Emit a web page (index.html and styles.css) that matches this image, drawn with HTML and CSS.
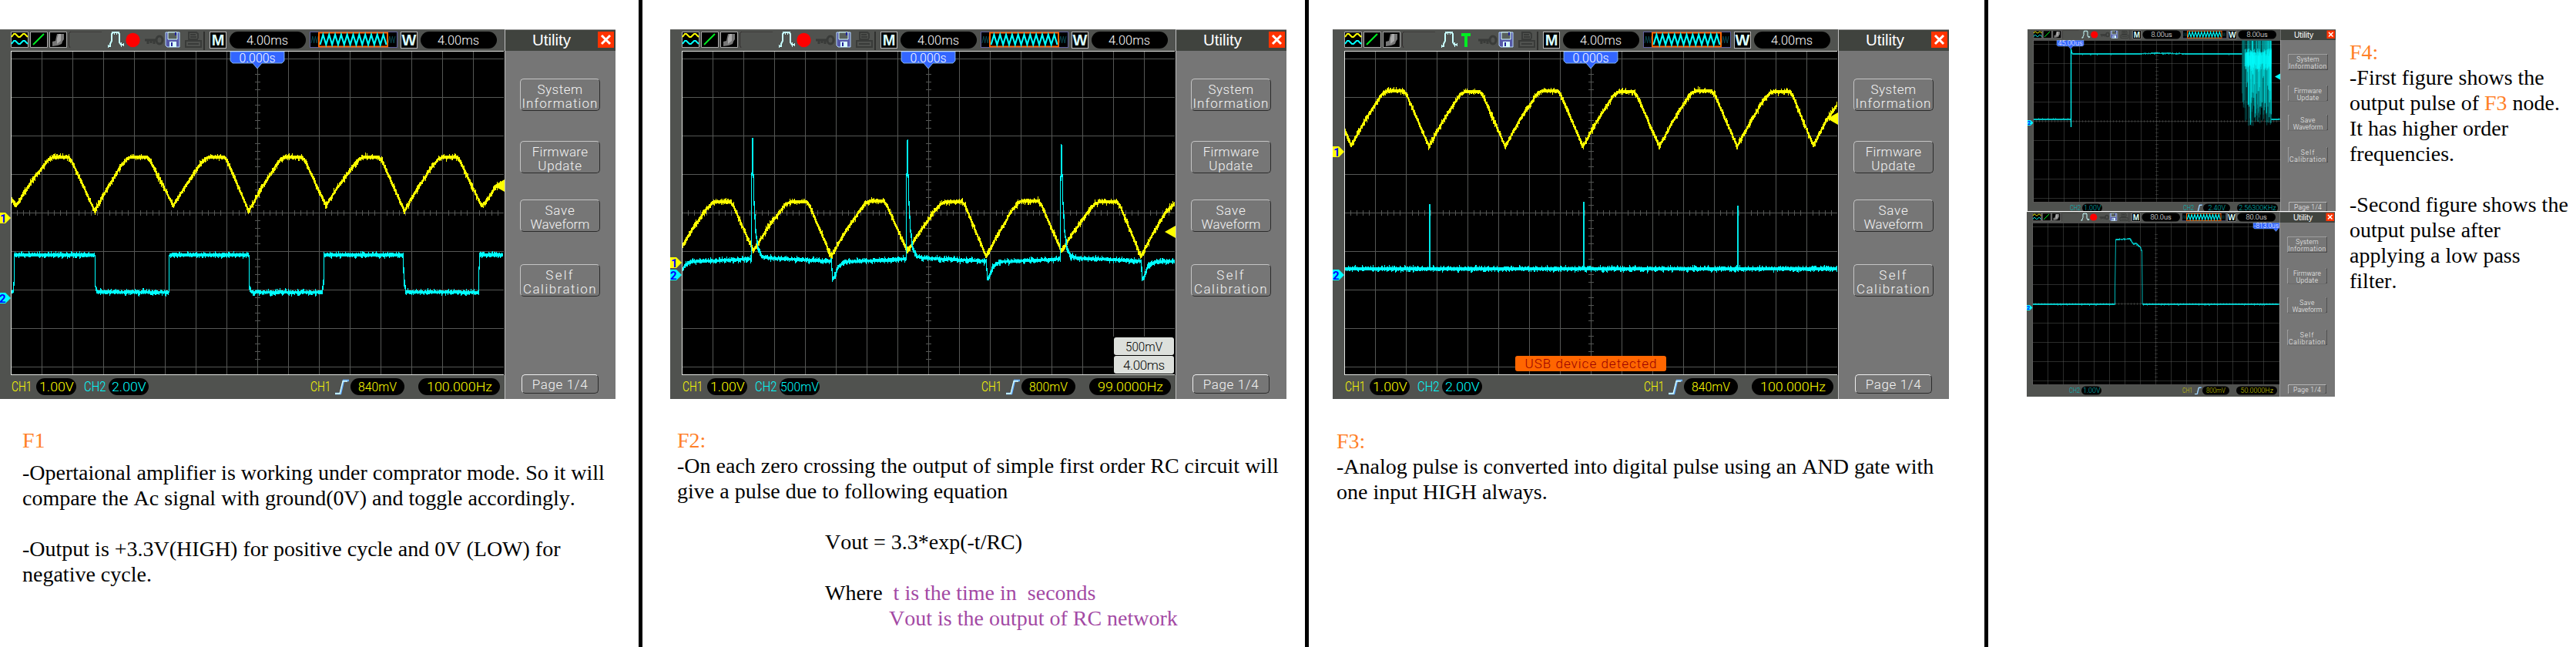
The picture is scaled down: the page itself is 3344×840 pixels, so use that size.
FILE: index.html
```
<!DOCTYPE html>
<html lang="en">
<head>
<meta charset="utf-8">
<title>Oscilloscope figures</title>
<link rel="stylesheet" href="styles.css">
</head>
<body>
<main class="board">
  <section class="panel panel-1">
    <div class="scope" data-scope="f1"></div>
    <div class="note">
      <h2 class="tag tag-gap">F1</h2>
      <p>-Opertaional amplifier is working under comprator mode. So it will<br>compare the Ac signal with ground(0V) and toggle accordingly.</p>
      <p>-Output is +3.3V(HIGH) for positive cycle and 0V (LOW) for<br>negative cycle.</p>
    </div>
  </section>
  <section class="panel panel-2">
    <div class="scope" data-scope="f2"></div>
    <div class="note">
      <h2 class="tag">F2:</h2>
      <p>-On each zero crossing the output of simple first order RC circuit will<br>give a pulse due to following equation</p>
      <div class="equation">
        <p>Vout = 3.3*exp(-t/RC)</p>
        <p>Where <span class="purple time">t is the time in&nbsp; seconds</span><br><span class="purple vout">Vout is the output of RC network</span></p>
      </div>
    </div>
  </section>
  <section class="panel panel-3">
    <div class="scope" data-scope="f3"></div>
    <div class="note">
      <h2 class="tag">F3:</h2>
      <p>-Analog pulse is converted into digital pulse using an AND gate with<br>one input HIGH always.</p>
    </div>
  </section>
  <section class="panel panel-4">
    <div class="thumbs">
      <div class="thumb thumb-top"><div class="scope small" data-scope="f4a"></div></div>
      <div class="thumb thumb-bottom"><div class="scope small" data-scope="f4b"></div></div>
    </div>
    <div class="note">
      <h2 class="tag">F4:</h2>
      <p>-First figure shows the<br>output pulse of <span class="orange">F3</span> node.<br>It has higher order<br>frequencies.</p>
      <p>-Second figure shows the<br>output pulse after<br>applying a low pass<br>filter.</p>
    </div>
  </section>
</main>
<script src="scope.js"></script>
</body>
</html>
```
FILE: styles.css
```
* { box-sizing: border-box; }
body { margin: 0; background: #fff; }
.board { display: flex; width: 3344px; height: 840px; overflow: hidden; }
.panel { flex: none; height: 840px; padding-top: 38px; border-right: 5px solid #000; overflow: hidden; }
.panel-1 { width: 834px; }
.panel-2 { width: 865px; padding-left: 36px; }
.panel-3 { width: 882px; padding-left: 31px; }
.panel-4 { width: 763px; padding-left: 50px; border-right: 0; display: flex; align-items: flex-start; }
.panel-1 .scope { margin-left: -1px; }

.note { font: 28px/33px "Liberation Serif", "Times New Roman", serif; font-kerning: none; color: #000; padding-top: 37px; white-space: nowrap; }
.note p { margin: 0 0 33px; }
.tag { margin: 0; font: inherit; font-kerning: none; color: #ff7f27; }
.tag-gap { margin-bottom: 9px; }
.orange { color: #ff7f27; }
.purple { color: #a349a4; }
.panel-1 .note { padding-left: 29px; }
.panel-2 .note { padding-left: 9px; }
.panel-3 .note { padding-left: 5px; padding-top: 38px; }
.panel-4 .note { padding-left: 18px; padding-top: 13px; }
.equation { padding-left: 192px; }
.time { margin-left: 7px; }
.vout { margin-left: 83px; }

.thumbs { width: 401px; flex: none; }
.thumb { width: 400px; overflow: hidden; }
.thumb-top { height: 236px; margin: 0 0 1px 1px; }
.thumb-bottom { height: 240px; }
.small { transform: scale(.5); transform-origin: 0 0; }

.scope { width: 800px; height: 480px; display: flex; background: #50524f; font-family: Roboto, "Liberation Sans", Arial, sans-serif; font-weight: 300; color: #fff; }
.main { width: 656px; height: 480px; flex: none; border-top: 1px solid #6a6c69; }
.toolbar { height: 27px; display: flex; padding: 2px 0 0 15px; }
.toolbar > * { flex: none; }
.toolbar svg { display: block; }
.letter { width: 22px; height: 22px; border: 1px solid #b8b8b8; background: #000; color: #dff; font-family: "Liberation Sans", Arial, sans-serif; font-weight: bold; font-size: 20px; line-height: 20px; text-align: center; }
.pill { background: #000; border-radius: 11px; height: 22px; line-height: 23px; font-size: 17px; display: flex; justify-content: center; white-space: nowrap; }
.toolbar .pill { width: 99px; }
.icons { width: 252px; height: 24px; }
.letter-m { margin: 0 4px 0 6px; }
.preview { margin: 0 4px 0 5px; }
.letter-w { margin-right: 4px; }
.plot { display: block; width: 656px; height: 421px; }
.status { height: 31px; padding: 4px 0 0 16px; display: flex; }
.status > * { flex: none; }
.ch { height: 22px; font-size: 17.5px; line-height: 22px; white-space: nowrap; }
.ch-a { width: 32px; }
.ch-b { width: 32px; margin-left: 10px; }
.ch-t { width: 32px; margin-left: 210px; }
.status .pill { width: 52px; }
.status .pill-level { width: 70px; margin-left: 2px; }
.status .pill-freq { width: 106px; margin-left: 18px; }
.edge { display: block; width: 18px; height: 22px; }
.hidden { visibility: hidden; }
.yellow { color: #ff0; }
.cyan { color: #0ff; }
.small .yellow { color: #cccc00; }
.small .cyan { color: #00bcbc; }
.fit { display: inline-block; flex: none; transform-origin: 50% 50%; }
.ch .fit { transform-origin: 0 50%; }

.side { width: 144px; height: 480px; background: #767676; border-left: 1px solid #c0c0c0; }
.side-head { height: 28px; background: #40433e; border-top: 1px solid #a0a0a0; display: flex; padding-top: 2px; }
.side-title { width: 120px; text-align: center; font-family: "Liberation Sans", Arial, sans-serif; font-weight: 400; font-size: 20.5px; line-height: 21px; }
.close { display: block; width: 21px; height: 21px; background: #ff3300; }
.btn { width: 104px; height: 42px; margin-left: 19px; border: 1px solid; border-color: #c4c4c4 #2c2c2c #2c2c2c #c4c4c4; border-radius: 5px; text-align: center; font-size: 17px; line-height: 18px; padding-top: 4px; white-space: nowrap; color: #f4f4f4; display: flex; flex-direction: column; align-items: center; }
.btn-1 { margin-top: 36px; }
.btn-2 { margin-top: 39px; }
.btn-3 { margin-top: 34px; }
.btn-4 { margin-top: 42px; }
.btn-page { width: 100px; height: 25px; margin: 101px 0 0 21px; padding-top: 3px; border-color: #eee #2c2c2c #2c2c2c #eee; }
```
FILE: scope.js
```
// Seeded generator so that the noise on the traces is stable between loads.
function rng(seed) {
  return function () {
    seed = (seed * 1664525 + 1013904223) % 4294967296;
    return seed / 4294967296;
  };
}

// One vertical bar per pixel column between neighbouring samples.
function trace(points, noise, seed) {
  const rnd = rng(seed);
  let d = '';
  for (let i = 0; i < points.length - 1; i++) {
    const [x0, y0] = points[i], [x1, y1] = points[i + 1];
    if (x1 - x0 < 1) {
      d += `M${Math.floor(x0) + .5} ${Math.min(y0, y1)}V${Math.max(y0, y1)}`;
      continue;
    }
    for (let x = x0; x < x1; x++) {
      const a = y0 + (y1 - y0) * (x - x0) / (x1 - x0);
      const b = y0 + (y1 - y0) * Math.min(1, (x + 1 - x0) / (x1 - x0));
      const top = Math.round(Math.min(a, b) - 1.5 - noise * rnd() * rnd());
      const bottom = Math.round(Math.max(a, b) + 1.5 + noise * rnd() * rnd());
      d += `M${Math.floor(x) + .5} ${top}V${bottom}`;
    }
  }
  return d;
}

// Rectified wave: [valleyX, valleyY, topStart, topEnd, topY] per hump.
function humps(start, list, end) {
  const p = [start];
  for (const [vx, vy, a, b, ty] of list) {
    const at = (t, h) => [vx + (a - vx) * t, vy - (vy - ty) * h];
    p.push([vx, vy], at(.16, .18), at(.36, .41), at(.62, .68), at(.8, .86), at(.92, .96), [a + 2, ty], [b - 1, ty], [b + 3, ty + 5]);
  }
  return p.concat(end);
}

const f2Cyan = [[16, 312], [19, 307], [24, 303], [32, 301.5], [101, 298.5], [105, 298]];
[[107, 144, 211], [308, 146, 412], [508, 152, 613]].forEach(([s, top, drop]) => {
  f2Cyan.push([s - 1.4, 298], [s, top], [s + 1, 190], [s + 2, 226], [s + 4, 262], [s + 7, 284], [s + 12, 295], [s + 20, 297],
    [drop - 2, 301], [drop, 324], [drop + 2, 322], [drop + 7, 308], [drop + 16, 302]);
  if (s < 500) f2Cyan.push([s + 195, 298.5]);
});
f2Cyan.push([655, 301]);

function burst() {
  const rnd = rng(12);
  let dark = '', bright = '';
  for (let x = 557; x < 633; x++) {
    const near = x < 575;
    if (rnd() < (near ? .6 : .92)) dark += `M${x + .5} ${rnd() < .85 ? 29 : 50}V${near && x < 564 ? 165 + rnd() * 40 : 185 + rnd() * 66}`;
    if (x > 563 && rnd() < .96) bright += `M${x + .5} ${50 + rnd() * 20}V${88 + rnd() * 20}`;
    if (x > 567 && rnd() < .5) bright += `M${x + .5} ${rnd() < .4 ? 30 : 60}V${110 + rnd() * 120}`;
  }
  bright += 'M632 50V244M628 50V190M606 60V200M598 70V240M579 60V248';
  return `<path d="${dark}" stroke="#008c8c" stroke-width="1.2"/><path d="${bright}" stroke="#0ff" stroke-width="1.3"/>`;
}

const scopes = {
  f1: {
    time: '4.00ms', pos: [300, 370, 335, '0.000s'], ch1: '1.00V', ch2: '2.00V', src: 'CH1', level: '840mV', freq: '100.000Hz',
    marks: [[1, 245], [2, 349]], arrow: [203, '#ff0'],
    yellow: humps([16, 220], [[22, 229, 69, 91, 166], [124, 236, 169, 193, 166], [226, 229, 271, 293, 166], [324, 236, 370, 394, 166],
      [424, 229, 472, 494, 166], [526, 236, 574, 595, 166]], [[626, 229], [632, 224], [645, 204], [655, 202]]),
    cyan: [[16, 341], [18, 340], [19, 330], [20, 293], [124, 293], [124.5, 331], [125, 335], [127, 341], [220, 341.5], [220.5, 310], [221, 293],
      [324, 293], [324.5, 330], [326, 339], [328, 341.5], [419, 341.5], [421, 328], [422, 293], [524, 293], [526, 330], [528, 341], [622, 341.5], [623, 310], [624, 293], [654, 293]]
  },
  f2: {
    time: '4.00ms', pos: [300, 370, 335, '0.000s'], ch1: '1.00V', ch2: '500mV', src: 'CH1', level: '800mV', freq: '99.0000Hz',
    marks: [[1, 303], [2, 319]], arrow: [263, '#ff0'],
    yellow: humps([16, 280], [[17, 279, 57, 79, 224], [108, 288, 155, 178, 224], [209, 295, 258, 278, 223], [308, 288, 356, 380, 224],
      [410, 295, 455, 479, 223], [508, 288, 556, 581, 224]], [[611, 295], [628, 263], [643, 238], [655, 226]]),
    cyan: f2Cyan, extra: 'scale'
  },
  f3: {
    time: '4.00ms', pos: [300, 370, 335, '0.000s'], ch1: '1.00V', ch2: '2.00V', src: 'CH1', level: '840mV', freq: '100.000Hz', ready: true,
    marks: [[1, 159], [2, 319]], arrow: [116, '#ff0'],
    yellow: humps([16, 131], [[24, 151, 70, 93, 80], [125, 152, 171, 192, 81], [224, 152, 271, 293, 80], [325, 152, 371, 392, 81],
      [424, 152, 470, 493, 80], [525, 152, 570, 594, 81]], [[624, 151], [640, 120], [655, 98]]),
    cyan: [[16, 311], [655, 311]], spikes: 'M126 227V310M326 224V310M526 229V310', extra: 'usb'
  },
  f4a: {
    time: '8.00us', pos: [76, 146, 112, '45.00us'], ch2: '1.00V', src: 'CH2', level: '2.40V', freq: '2.56300KHz',
    marks: [[2, 243]], arrow: [123, '#0ff'], burst: true,
    cyan: [[16, 233], [112, 233], [112.5, 254], [113, 51], [114, 56], [117, 64], [240, 64], [330, 62], [420, 63], [557, 64]],
    cyan2: [[633, 233], [655, 233]], rise: 'M113 51V254'
  },
  f4b: {
    time: '80.0us', pos: [588, 656, 647, '-813.0us'], ch2: '1.00V', src: 'CH1', level: '800mV', freq: '50.0000Hz',
    marks: [[2, 249]],
    cyan: [[16, 240], [229, 240]], cyan2: [[231, 72], [240, 71], [268, 70], [277, 83], [284, 82], [295, 91], [299, 103]], cyan3: [[301, 240], [655, 240]],
    spikes: 'M229 240V200L231 72M299 100L300 206V240'
  }
};

function grid() {
  let lines = '', ticks = '';
  for (let x = 55; x < 655; x += 40) lines += `M${x + .5} 29V448`;
  for (let y = 38; y < 448; y += 50) lines += `M16 ${y + .5}H655`;
  for (let x = 23; x < 655; x += 8) ticks += `M${x + .5} 235V242`;
  for (let y = 38; y < 448; y += 10) if (y > 50) ticks += `M332 ${y + .5}H339`;
  return `<path d="${lines}${ticks}" stroke="#555755"/>`;
}

function plot(s, small) {
  const line = (p, n, seed, c) => p ? `<path d="${trace(p, n, seed)}" stroke="${c}"/>` : '';
  const [a, b, p, label] = s.pos;
  const marks = s.marks.map(([n, y]) =>
    `<path d="M0 ${y - 7}H8L15 ${y}L8 ${y + 7}H0Z" fill="${n === 1 ? '#ff0' : '#0ff'}"/>
     <text x="${n === 1 ? 1 : 0}" y="${y + 5.5}" font-size="15" font-weight="bold" fill="#00f">${n}</text>`).join('');
  const arrow = s.arrow ? `<path d="M642 ${s.arrow[0]}L656 ${s.arrow[0] - 8}V${s.arrow[0] + 8}Z" fill="${s.arrow[1]}"/>` : '';
  let extra = '';
  if (s.extra === 'usb') extra = `<rect x="237" y="424" width="196" height="20" rx="3" fill="#f60"/>
    <text x="249.5" y="440" font-size="17" textLength="171" fill="#900">USB device detected</text>`;
  if (s.extra === 'scale') extra = `<path d="M575 399h80v49h-80z" fill="#000"/><rect x="576" y="400" width="78" height="23" rx="3" fill="#dde0dc"/>
    <rect x="576" y="424" width="78" height="23" rx="3" fill="#dde0dc"/>
    <text x="591" y="417.5" font-size="17" textLength="48" lengthAdjust="spacingAndGlyphs" fill="#000">500mV</text>
    <text x="588" y="441.5" font-size="17" textLength="54" fill="#000">4.00ms</text>`;
  return `<svg class="plot" viewBox="0 28 656 421" fill="none">
    <rect x="15" y="28" width="641" height="421" fill="#000"/>
    <g shape-rendering="crispEdges">${grid()}<path d="M15.5 449V28.5H655M15 448.5H655" stroke="${small ? '#999' : '#e4e6e2'}"/></g>
    <path d="M${a} 29H${b}V41L${b - 3} 44H${p + 6}L${p} 51L${p - 6} 44H${a + 3}L${a} 41Z" fill="#36f" stroke="#9cf" stroke-width=".8"/>
    <text x="${(a + b) / 2}" y="42.500" text-anchor="middle" font-size="17" textLength="${small ? 64 : 47}" lengthAdjust="spacingAndGlyphs" fill="#fff">${label}</text>
    <g shape-rendering="crispEdges">${line(s.yellow, 4.5, 7, '#ff0')}${line(s.cyan, small ? 1.4 : 4.2, 21, '#0ff')}
    ${line(s.cyan2, 2, 5, '#0ff')}${line(s.cyan3, 1.4, 9, '#0ff')}</g>
    ${s.spikes ? `<path d="${s.spikes}" stroke="${small ? '#00c8c8' : '#0ff'}" stroke-width="1.8"/>` : ''}
    ${s.rise ? `<path d="${s.rise}" stroke="#0ff" stroke-width="2.6"/>` : ''}
    ${s.burst ? burst() : ''}${marks}${arrow}${extra}</svg>`;
}

const zig = (x, y, w, h, n) => {
  let d = `M${x} ${y}`;
  for (let i = 1; i <= n; i++) d += `L${x + w * i / n} ${i % 2 ? y - h : y}`;
  return d;
};

function icons(ready) {
  return `<svg class="icons" viewBox="0 0 252 24" fill="none">
    <g fill="#000" stroke="#aaa"><path d="M.5 .5h22v20h-22zM25.5 .5h22v20h-22zM50.5 .5h22v20h-22z"/></g>
    <path d="M1 7l3-4h2l4 4h2l4-4h2l4 4" stroke="#ff0" stroke-width="2"/>
    <path d="M1 16l3-4h2l4 4h2l4-4h2l4 4" stroke="#0ff" stroke-width="2"/>
    <path d="M29 17L43 3" stroke="#0e2" stroke-width="2"/>
    <path d="M60 3h9v7l-2 3-1 3-5 2-7 1v-6l4-1 1-5z" fill="#777"/><path d="M62 3h3v9l-5 4v-7z" fill="#aaa"/>
    <path d="M77 21L75.500 18V2L78 0H118" stroke="#302c2c"/>
    <path d="M127 19h2V16L131 12V3L133 1H139L141 3V14L143 17H147" stroke="#c8ffff" stroke-width="2"/>
    <path d="M131.500 0v3M134.500 0v4M137.500 0v4M140.500 0v3M126.500 17v4M143.500 14v6M146.500 15v4" stroke="#c8ffff"/>
    ${ready ? '<path d="M152 4H164M158 3V20" stroke="#0e2" stroke-width="4"/>' : '<circle cx="158.500" cy="11" r="9.200" fill="#f00"/>'}
    <path d="M174 11h16M178 12v4M182 12v3M186 12v4" stroke="#393b39" stroke-width="3"/><ellipse cx="193" cy="11" rx="4" ry="5" stroke="#393b39" stroke-width="3"/>
    <path d="M201 1h18v19h-16l-2-2z" fill="#5559a8" stroke="#b8dcff"/><path d="M204 1h12v9h-12z" fill="#58605c" stroke="#d8ffff"/>
    <path d="M206 13h9v7h-9z" fill="#d8ffff"/><path d="M208 14h2v5h-2zM213 1h2v4h-2z" fill="#22229a"/>
    <path d="M231 9V1h10l2 2v6M227 12h20v8h-20zM233 4h7M233 7h8M230 10h13M230 16h14" stroke="#393b39" stroke-width="2"/>
    <path d="M251 -2V24" stroke="#111"/></svg>`;
}

const preview = `<svg class="preview" width="114" height="22" viewBox="0 0 114 22" fill="none">
  <rect x=".5" y=".5" width="113" height="20" fill="#000" stroke="#6060a0"/>
  <path d="${zig(2, 15, 9, 9, 5)}${zig(102, 15, 9, 9, 5)}" stroke="#0a4a52"/>
  <rect x="12" y="1.500" width="89" height="18" fill="#000" stroke="#f60" stroke-width="2"/>
  <path d="${zig(13.500, 17, 86, 13, 22)}" stroke="#0ff" stroke-width="2.200"/></svg>`;

const fit = (text, width) => `<span class="fit" data-width="${width}">${text}</span>`;
const spaced = (text, width) => `<span class="spaced" data-width="${width}">${text}</span>`;

document.querySelectorAll('[data-scope]').forEach(el => {
  const s = scopes[el.dataset.scope];
  const trig = s.src === 'CH1' ? 'yellow' : 'cyan';
  el.innerHTML = `
    <div class="main">
      <div class="toolbar">${icons(s.ready)}
        <div class="letter letter-m">M</div><div class="pill">${fit(s.time, 54)}</div>
        ${preview}
        <div class="letter letter-w">W</div><div class="pill">${fit(s.time, 54)}</div>
      </div>
      ${plot(s, el.classList.contains('small'))}
      <div class="status">
        <div class="ch ch-a yellow ${s.ch1 ? '' : 'hidden'}">${s.ch1 ? fit('CH1', 26) : ''}</div>
        <div class="pill yellow ${s.ch1 ? '' : 'hidden'}">${s.ch1 ? fit(s.ch1, 45) : ''}</div>
        <div class="ch ch-b cyan">${fit('CH2', 28)}</div>
        <div class="pill cyan">${fit(s.ch2, s.ch2 === '500mV' ? 50 : 45)}</div>
        <div class="ch ch-t ${trig}">${fit(s.src, s.src === 'CH1' ? 26 : 28)}</div>
        <svg class="edge" viewBox="0 0 18 22" fill="none"><path d="M0 20H7L11 3H18" stroke="#6ab0ff" stroke-width="2.500"/><path d="M0 20H6L10 4H16" stroke="#d8ffff" stroke-width="1.300"/></svg>
        <div class="pill pill-level ${trig}">${fit(s.level, s.level === '2.40V' ? 45 : 50)}</div>
        <div class="pill pill-freq ${trig}">${fit(s.freq, s.freq.length > 9 ? 97 : 85)}</div>
      </div>
    </div>
    <div class="side">
      <div class="side-head"><div class="side-title">Utility</div>
        <svg class="close" viewBox="0 0 21 21"><path d="M5 5L16 16M16 5L5 16" stroke="#fff" stroke-width="3"/></svg></div>
      <div class="btn btn-1">${spaced('System', 59)}${spaced('Information', 99)}</div>
      <div class="btn btn-2">${spaced('Firmware', 72)}${spaced('Update', 57)}</div>
      <div class="btn btn-3">${spaced('Save', 39)}${spaced('Waveform', 77)}</div>
      <div class="btn btn-4">${spaced('Self', 37)}${spaced('Calibration', 96)}</div>
      <div class="btn btn-page">${spaced('Page 1/4', 72)}</div>
    </div>`;
});

// Stretch or letter-space the readouts to the widths of the instrument font.
document.querySelectorAll('.fit').forEach(el => {
  el.style.transform = `scaleX(${el.dataset.width / el.offsetWidth})`;
});
document.querySelectorAll('.spaced').forEach(el => {
  el.style.letterSpacing = (el.dataset.width - el.offsetWidth) / el.textContent.length + 'px';
});
```
